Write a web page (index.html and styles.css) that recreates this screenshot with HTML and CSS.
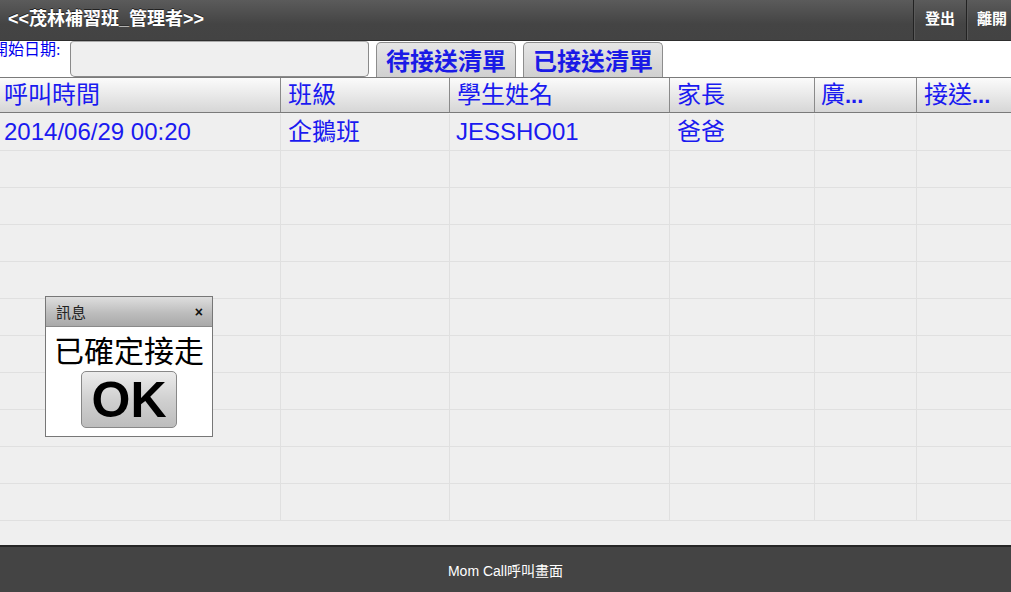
FILE: index.html
```html
<!DOCTYPE html>
<html>
<head>
<meta charset="utf-8">
<link rel="stylesheet" href="styles.css">
</head>
<body>
<div class="app">
  <header class="topbar">
    <div class="title">&lt;&lt;茂林補習班_管理者&gt;&gt;</div>
    <div class="top-actions">
      <div class="top-btn">登出</div>
      <div class="top-btn">離開</div>
    </div>
  </header>
  <div class="toolbar">
    <label class="date-label">開始日期:</label>
    <div class="date-input"></div>
    <div class="tab-btn">待接送清單</div>
    <div class="tab-btn">已接送清單</div>
  </div>
  <div class="grid">
    <div class="grid-head">
      <div class="hcell c1">呼叫時間</div>
      <div class="hcell c2">班級</div>
      <div class="hcell c3">學生姓名</div>
      <div class="hcell c4">家長</div>
      <div class="hcell c5">廣<span class="dots">...</span></div>
      <div class="hcell c6">接送<span class="dots">...</span></div>
    </div>
    <div class="grid-body">
      <div class="row">
        <div class="cell c1 sans">2014/06/29 00:20</div>
        <div class="cell c2">企鵝班</div>
        <div class="cell c3 sans">JESSHO01</div>
        <div class="cell c4">爸爸</div>
        <div class="cell c5"></div>
        <div class="cell c6"></div>
      </div>
      <div class="row"><div class="cell c1"></div><div class="cell c2"></div><div class="cell c3"></div><div class="cell c4"></div><div class="cell c5"></div><div class="cell c6"></div></div>
      <div class="row"><div class="cell c1"></div><div class="cell c2"></div><div class="cell c3"></div><div class="cell c4"></div><div class="cell c5"></div><div class="cell c6"></div></div>
      <div class="row"><div class="cell c1"></div><div class="cell c2"></div><div class="cell c3"></div><div class="cell c4"></div><div class="cell c5"></div><div class="cell c6"></div></div>
      <div class="row"><div class="cell c1"></div><div class="cell c2"></div><div class="cell c3"></div><div class="cell c4"></div><div class="cell c5"></div><div class="cell c6"></div></div>
      <div class="row"><div class="cell c1"></div><div class="cell c2"></div><div class="cell c3"></div><div class="cell c4"></div><div class="cell c5"></div><div class="cell c6"></div></div>
      <div class="row"><div class="cell c1"></div><div class="cell c2"></div><div class="cell c3"></div><div class="cell c4"></div><div class="cell c5"></div><div class="cell c6"></div></div>
      <div class="row"><div class="cell c1"></div><div class="cell c2"></div><div class="cell c3"></div><div class="cell c4"></div><div class="cell c5"></div><div class="cell c6"></div></div>
      <div class="row"><div class="cell c1"></div><div class="cell c2"></div><div class="cell c3"></div><div class="cell c4"></div><div class="cell c5"></div><div class="cell c6"></div></div>
      <div class="row"><div class="cell c1"></div><div class="cell c2"></div><div class="cell c3"></div><div class="cell c4"></div><div class="cell c5"></div><div class="cell c6"></div></div>
      <div class="row"><div class="cell c1"></div><div class="cell c2"></div><div class="cell c3"></div><div class="cell c4"></div><div class="cell c5"></div><div class="cell c6"></div></div>
    </div>
    <div class="dialog">
      <div class="dialog-title">
        <span>訊息</span>
        <span class="close">×</span>
      </div>
      <div class="dialog-body">
        <div class="dialog-msg">已確定接走</div>
        <div class="ok-btn">OK</div>
      </div>
    </div>
  </div>
  <footer class="footer">Mom Call呼叫畫面</footer>
</div>
</body>
</html>
```
FILE: styles.css
```css
html, body {
  margin: 0;
  padding: 0;
}
body {
  width: 1011px;
  height: 592px;
  overflow: hidden;
  background: #fff;
  font-family: "Liberation Sans", "Noto Sans CJK TC", sans-serif;
}
.app {
  display: flex;
  flex-direction: column;
  height: 592px;
}
.topbar {
  height: 40px;
  border-bottom: 1px solid #2e2e2e;
  background: linear-gradient(#5b5b5b, #444 60%, #434343);
  display: flex;
  align-items: stretch;
  justify-content: space-between;
  flex-shrink: 0;
}
.title {
  color: #fff;
  font-weight: bold;
  font-size: 18px;
  line-height: 38px;
  padding-left: 8px;
  text-shadow: 0 -1px 0 #222;
}
.top-actions {
  display: flex;
}
.top-btn {
  width: 53px;
  box-sizing: border-box;
  border-left: 1px solid #222;
  box-shadow: inset 1px 0 0 #5a5a5a;
  color: #fff;
  font-weight: bold;
  font-size: 15px;
  line-height: 38px;
  text-align: center;
}
.top-btn + .top-btn {
  width: 45px;
  text-align: left;
  padding-left: 10px;
}
.toolbar {
  height: 36px;
  display: flex;
  align-items: flex-start;
  flex-shrink: 0;
}
.date-label {
  color: #0000ee;
  font-family: "Liberation Serif", "Noto Sans CJK TC", serif;
  font-size: 16px;
  line-height: 18px;
  margin-left: -8px;
  width: 78px;
  white-space: nowrap;
}
.date-input {
  width: 299px;
  height: 36px;
  background: #efefef;
  border: 1px solid #8a8a8a;
  border-top-color: #aaa;
  border-radius: 4px 4px 5px 5px;
  box-sizing: border-box;
}
.tab-btn {
  width: 140px;
  height: 35px;
  box-sizing: border-box;
  margin-top: 1px;
  margin-left: 7px;
  border: 1px solid #8d8d8d;
  border-bottom: none;
  border-radius: 5px 5px 0 0;
  background: linear-gradient(#e6e6e6, #d0d0d0);
  color: #1a1ae6;
  font-family: "Noto Sans CJK TC", sans-serif;
  font-size: 24px;
  font-weight: bold;
  line-height: 33px;
  text-align: center;
  white-space: nowrap;
}
.grid {
  position: relative;
  flex: 1;
  display: flex;
  flex-direction: column;
  background: #efefef;
  overflow: hidden;
}
.grid-head {
  display: flex;
  height: 36px;
  box-sizing: border-box;
  border-top: 1px solid #7a7a7a;
  border-bottom: 1px solid #7a7a7a;
  background: linear-gradient(#fbfbfb, #e9e9e9 50%, #d6d6d6);
  flex-shrink: 0;
}
.hcell {
  box-sizing: border-box;
  border-right: 1px solid #8a8a8a;
  color: #1a1af0;
  font-family: "Liberation Serif", "Noto Sans CJK TC", serif;
  font-size: 24px;
  line-height: 34px;
  padding-left: 5px;
  white-space: nowrap;
  overflow: hidden;
}
.hcell.c1 { padding-left: 4px; }
.hcell.c2, .hcell.c3, .hcell.c4 { padding-left: 7px; }
.hcell.c5 { padding-left: 6px; }
.hcell.c6 { border-right: none; padding-left: 7px; }
.dots {
  font-family: "Liberation Sans", sans-serif;
  font-weight: bold;
  font-size: 22px;
}
.c1 { width: 281px; }
.c2 { width: 169px; }
.c3 { width: 220px; }
.c4 { width: 145px; }
.c5 { width: 102px; }
.c6 { flex: 1; }
.grid-body {
  display: flex;
  flex-direction: column;
  padding-top: 1px;
}
.row {
  display: flex;
  height: 37px;
  box-sizing: border-box;
  border-bottom: 1px solid #e0e0e0;
}
.cell {
  box-sizing: border-box;
  border-right: 1px solid #e0e0e0;
  color: #1a1af0;
  font-family: "Liberation Serif", "Noto Sans CJK TC", serif;
  font-size: 24px;
  line-height: 36px;
  padding-left: 7px;
  white-space: nowrap;
}
.cell.c1 { padding-left: 4px; }
.cell.c3 { padding-left: 6px; }
.cell.c6 { border-right: none; }
.cell.sans {
  font-family: "Liberation Sans", sans-serif;
  font-size: 24px;
}
.dialog {
  position: absolute;
  left: 45px;
  top: 219px;
  width: 168px;
  height: 141px;
  box-sizing: border-box;
  border: 1px solid #777;
  background: #fff;
  display: flex;
  flex-direction: column;
}
.dialog-title {
  height: 30px;
  box-sizing: border-box;
  border-bottom: 1px solid #8a8a8a;
  background: linear-gradient(#dedede, #bdbdbd 55%, #a9a9a9);
  display: flex;
  justify-content: space-between;
  align-items: center;
  padding: 0 9px 0 10px;
  font-size: 15px;
  color: #222;
  font-family: "Noto Sans CJK TC", sans-serif;
}
.close {
  font-family: "Liberation Sans", sans-serif;
  font-weight: bold;
  font-size: 14px;
  color: #111;
}
.dialog-body {
  display: flex;
  flex-direction: column;
  align-items: center;
}
.dialog-msg {
  font-family: "Liberation Serif", "Noto Sans CJK TC", serif;
  font-size: 30px;
  line-height: 40px;
  color: #000;
  margin-top: 5px;
}
.ok-btn {
  width: 96px;
  height: 57px;
  box-sizing: border-box;
  border: 1px solid #888;
  border-radius: 5px;
  background: linear-gradient(#ececec, #d0d0d0 50%, #bdbdbd);
  font-family: "Liberation Sans", sans-serif;
  font-weight: bold;
  font-size: 50px;
  line-height: 56px;
  text-align: center;
  color: #000;
  margin-top: -1px;
}
.footer {
  height: 47px;
  box-sizing: border-box;
  border-top: 2px solid #262626;
  background: #444;
  color: #fff;
  font-size: 14px;
  text-align: center;
  line-height: 49px;
  flex-shrink: 0;
}
```
